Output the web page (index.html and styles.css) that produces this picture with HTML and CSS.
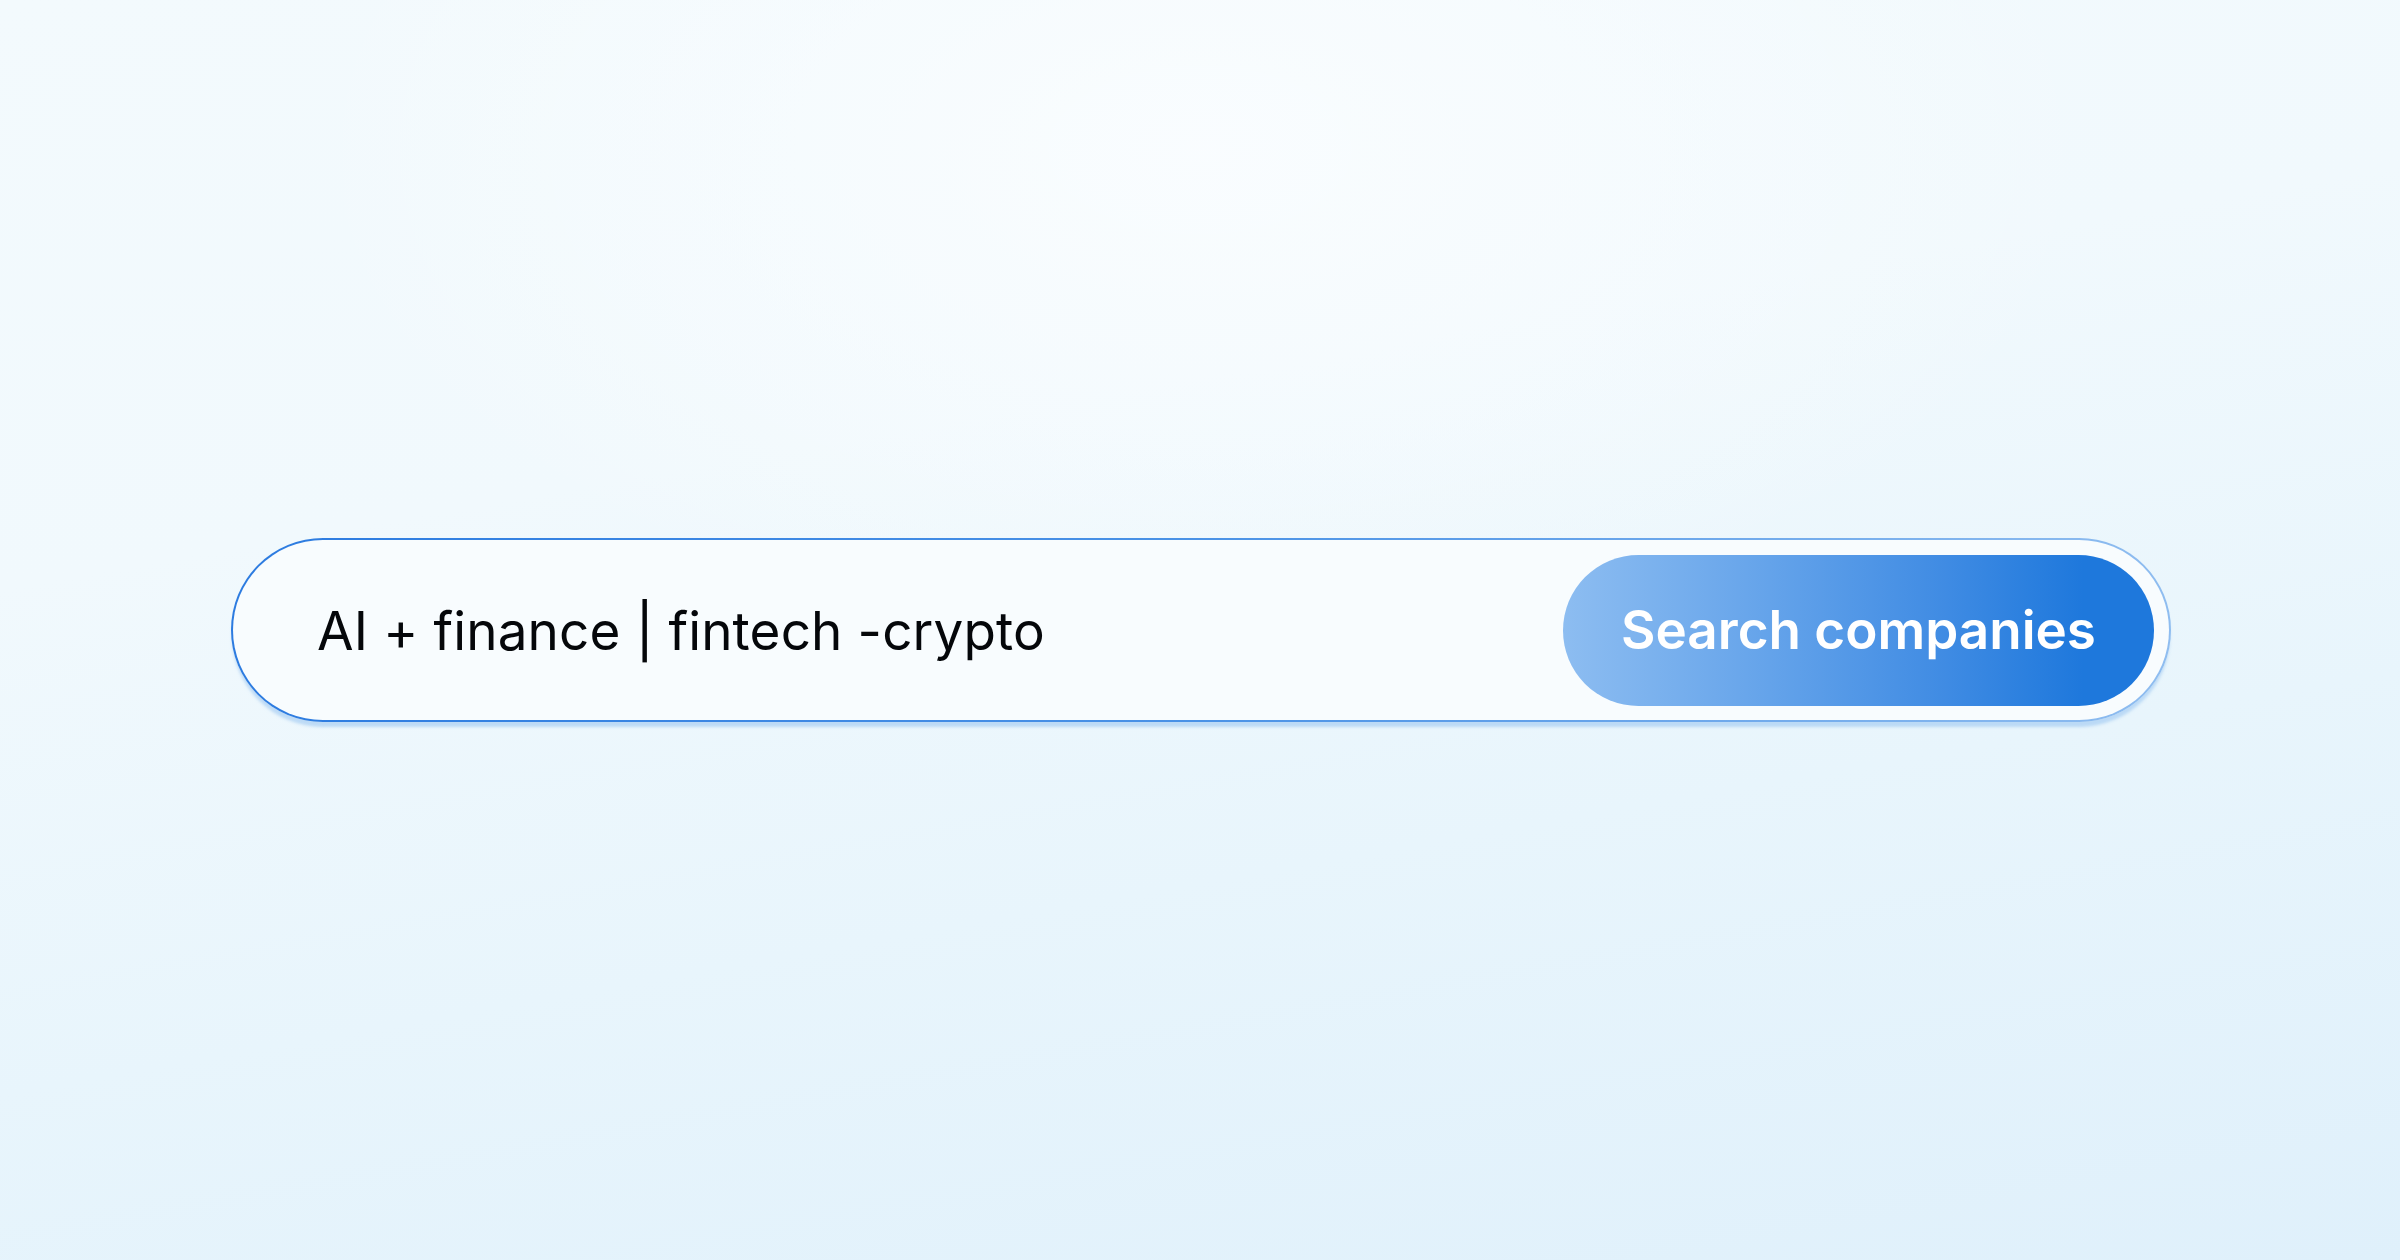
FILE: index.html
```html
<!DOCTYPE html>
<html lang="en">
<head>
<meta charset="utf-8">
<title>Search companies</title>
<link rel="stylesheet" href="styles.css">
</head>
<body>
<main class="stage">
  <form class="search-bar" onsubmit="return false">
    <div class="query">AI + finance <span class="pipe">|</span> fintech -crypto</div>
    <button class="search-btn" type="submit">Search companies</button>
  </form>
</main>
</body>
</html>
```
FILE: styles.css
```css
html, body {
  margin: 0;
  padding: 0;
}
body {
  width: 2400px;
  height: 1260px;
  overflow: hidden;
  font-family: Inter, "Noto Sans", sans-serif;
  background:
    radial-gradient(ellipse 900px 500px at 1200px 150px, rgba(250,253,255,0.9), rgba(250,253,255,0) 100%),
    linear-gradient(170deg, #f3fafd 0%, #f1f9fd 35%, #e8f5fc 65%, #dff0fb 100%);
}
.stage {
  height: 1260px;
  display: flex;
  align-items: flex-start;
  justify-content: flex-start;
  padding: 538px 0 0 231px;
  box-sizing: border-box;
}
.search-bar {
  width: 1940px;
  height: 184px;
  box-sizing: border-box;
  border-radius: 92px;
  border: 2px solid transparent;
  background:
    linear-gradient(#f8fcfe, #f8fcfe) padding-box,
    linear-gradient(90deg, #2c7be0 0%, #4a92e6 50%, #8fbdf0 100%) border-box;
  box-shadow: 0 6px 3px -1px rgba(150, 195, 240, 0.55);
  display: flex;
  align-items: center;
  justify-content: space-between;
  padding: 0 15px 0 84px;
}
.query {
  font-size: 53px;
  font-weight: 400;
  color: #05070a;
  letter-spacing: 0.15px;
  white-space: nowrap;
  padding-top: 2px;
}
.pipe {
  display: inline-block;
  transform: scaleX(1.1);
}
.search-btn {
  width: 591px;
  height: 151px;
  border: none;
  border-radius: 76px;
  background: linear-gradient(90deg, #8dbdf1 0%, #64a3ea 35%, #3f8be3 65%, #1e78dc 88%, #1e78dc 100%);
  color: #ffffff;
  font-family: Inter, "Noto Sans", sans-serif;
  font-size: 53px;
  font-weight: 600;
  padding: 0;
  cursor: pointer;
}
```
